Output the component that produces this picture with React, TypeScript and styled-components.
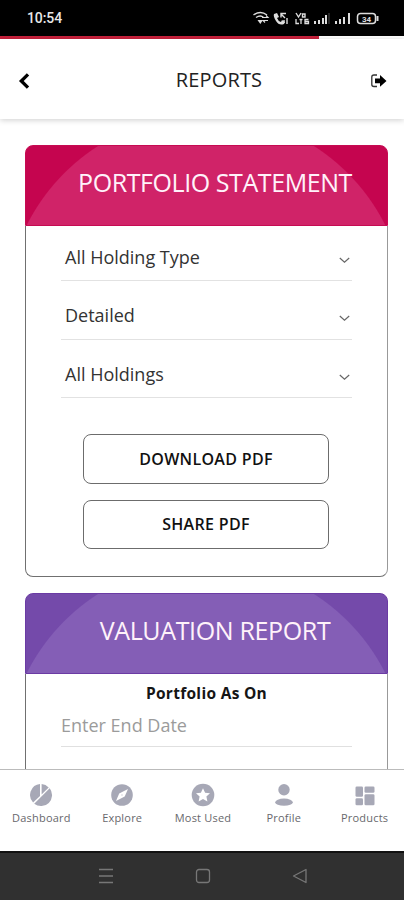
import React from "react";
import styled, { createGlobalStyle } from "styled-components";

const GlobalStyle = createGlobalStyle`
  * { box-sizing: border-box; }
  body { margin: 0; background: #fff; font-family: "Open Sans", "Noto Sans", sans-serif; }
  button { font: inherit; }
`;

const Screen = styled.div`
  width: 404px;
  height: 900px;
  display: flex;
  flex-direction: column;
  overflow: hidden;
  background: #fff;
`;

const StatusBar = styled.div`
  height: 36px;
  flex: none;
  display: flex;
  align-items: center;
  justify-content: space-between;
  padding: 0 24px 0 27px;
  background: #000;
`;

const Clock = styled.span`
  color: #e8e8e8;
  font-family: Roboto, sans-serif;
  font-size: 14px;
  font-weight: 500;
  letter-spacing: -0.1px;
`;

const Progress = styled.div`
  height: 3px;
  flex: none;
  background: #fff;
`;

const ProgressFill = styled.div`
  width: 319px;
  height: 3px;
  background: #c8213c;
`;

const Header = styled.header`
  height: 80px;
  flex: none;
  display: grid;
  grid-template-columns: 40px 1fr 40px;
  align-items: center;
  padding: 4px 12px 0;
  box-shadow: 0 1px 6px rgba(0, 0, 0, 0.2);
  z-index: 1;
  background: #fff;
`;

const IconButton = styled.button<{ $end?: boolean }>`
  display: flex;
  justify-content: ${(p) => (p.$end ? "flex-end" : "flex-start")};
  padding: 0 5px;
  border: 0;
  background: none;
`;

const PageTitle = styled.h1`
  margin: 0;
  padding: 0 0 2px 34px;
  text-align: center;
  font-size: 20px;
  font-weight: 400;
  line-height: 26px;
  letter-spacing: 0.15px;
  color: #222;
`;

const Content = styled.main`
  flex: 1;
  min-height: 0;
  overflow: hidden;
  display: flex;
  flex-direction: column;
  gap: 16px;
  padding: 26px 16px 0 25px;
`;

const Card = styled.section<{ $height: number }>`
  height: ${(p) => p.$height}px;
  flex: none;
  display: flex;
  flex-direction: column;
`;

const CardHeader = styled.div<{ $base: string; $arc: string; $edge: string }>`
  height: 81px;
  flex: none;
  padding: 21px 0 0 17px;
  display: flex;
  justify-content: center;
  border: 1px solid ${(p) => p.$edge};
  border-radius: 8px 8px 0 0;
  background: radial-gradient(circle at 180px 169px, ${(p) => p.$arc} 200px, ${(p) => p.$base} 201px);
`;

const CardBody = styled.div`
  flex: 1;
  border: 1px solid #707070;
  border-top: 0;
  border-right-color: #999;
  border-radius: 0 0 8px 8px;
`;

const CardTitle = styled.h2<{ $spacing: number }>`
  margin: 0;
  color: #fff2fa;
  font-size: 25px;
  font-weight: 400;
  line-height: 30px;
  white-space: nowrap;
  letter-spacing: ${(p) => p.$spacing}px;
`;

const Fields = styled.div`
  display: flex;
  flex-direction: column;
  margin: 0 35px;
  padding-top: 5px;
`;

const Select = styled.div`
  height: 58.5px;
  display: flex;
  align-items: center;
  justify-content: space-between;
  padding: 11px 2px 0 4px;
  border-bottom: 1px solid #e2e2e2;
  color: #333;
  font-size: 18px;
  &:first-child { height: 50px; padding-top: 3px; }
  svg { margin-top: 7px; }
`;

const Actions = styled.div`
  display: flex;
  flex-direction: column;
  gap: 16px;
  margin: 36px 58px 0 57px;
`;

const ActionButton = styled.button`
  height: 49.5px;
  border: 1px solid #6c6c6c;
  border-radius: 8px;
  background: #fff;
  color: #111;
  font-size: 16px;
  font-weight: 600;
  letter-spacing: 0.32px;
`;

const FieldCaption = styled.div`
  padding-top: 8px;
  text-align: center;
  font-size: 15.5px;
  font-weight: 700;
  line-height: 22px;
  letter-spacing: 0.3px;
  color: #151515;
`;

const DateField = styled.div`
  height: 43px;
  margin: 0 35px;
  padding-top: 8px;
  border-bottom: 1px solid #e0e0e0;
  color: #9b9b9b;
  font-size: 18px;
  line-height: 26px;
`;

const TabBar = styled.nav`
  height: 82px;
  flex: none;
  display: grid;
  grid-template-columns: repeat(5, 80.8px);
  border-top: 1px solid #bbb;
  background: #fff;
`;

const Tab = styled.div`
  display: flex;
  flex-direction: column;
  align-items: center;
  padding: 13px 0 0 2px;
  gap: 4px;
  color: #68686c;
  font-size: 11px;
  line-height: 14px;
  white-space: nowrap;
  letter-spacing: 0.2px;
`;

const SystemNav = styled.div`
  height: 49px;
  flex: none;
  display: flex;
  align-items: center;
  justify-content: center;
  gap: 81px;
  padding: 0 0 2px 1px;
  border-top: 2px solid #111;
  background: #303030;
`;

const StatusIcons = () => (
  <svg width="128" height="18" viewBox="0 0 128 18" fill="none" stroke="#ddd" strokeWidth="1.5">
    <path d="M1.5 6 Q8.5 1 15 6M4 8.5Q8.5 5.5 11.5 8.5" />
    <path d="M5.5 11h5.5l-2.7 4z" fill="#ddd" stroke="none" />
    <path d="M10 8.5h6l-2-2M16 11.5h-5l2 2" strokeWidth="1.1" />
    <path d="M22 5l3-1 2 4-2 1q1 3 4 4l1-2 3 2-1 2q-5 2-8-3t-2-7z" fill="#ddd" stroke="none" />
    <path d="M29 5l4 4M34 4.5h-5v4M35 9v6M32 11v3" strokeWidth="1.4" />
    <path d="M44 4l2.5 4L49 4M50.5 5h2.5v3h-2.5z" strokeWidth="1.4" />
    <path d="M44 10v4.5h3M47.5 10.5h3M49 10.5v4.5M56.500 10.500h-3.500v4h3.500v-2h-3" strokeWidth="1.3" />
    <path d="M63 12v3M67 11v4M71 9v6M74 6v9" strokeWidth="2" />
    <path d="M77 4v11" strokeWidth="1.500" stroke="#333" />
    <path d="M84 12v3M88 10v5M92 8v7M97 4v11" strokeWidth="2" />
    <rect x="105.500" y="4.500" width="18" height="10" rx="3" />
    <path d="M125.500 7v5" strokeWidth="2" />
    <text x="110" y="12.500" fill="#ddd" stroke="none" fontFamily="Roboto, sans-serif" fontSize="8" fontWeight="700">34</text>
  </svg>
);

const BackIcon = () => (
  <svg width="15" height="18" viewBox="0 0 15 18" fill="none" stroke="#000" strokeWidth="3.3">
    <path d="M11 2.3L4.3 9l6.700 6.700" />
  </svg>
);

const ExitIcon = () => (
  <svg width="17" height="16" viewBox="0 0 17 16">
    <path d="M7 2H4Q1.800 2 1.800 4v7.500q0 2 2.200 2h3" fill="none" stroke="#333" strokeWidth="1.3" />
    <path d="M5 5.500h5V2l6.500 5.900-6.500 5.900v-3.500H5z" fill="#000" />
  </svg>
);

const Chevron = () => (
  <svg width="11" height="7" viewBox="0 0 11 7" fill="none" stroke="#666" strokeWidth="1.2">
    <path d="M.8 1l4.700 4.300L10.200 1" />
  </svg>
);

const DashboardIcon = () => (
  <>
    <path d="M10 .1A11 11 0 0 0 3.100 18.600L10 12z" />
    <path d="M11.600 0v10.400l7.100-7A11 11 0 0 0 11.600 0z" />
    <path d="M19.700 4.300L4.200 19.700A11 11 0 0 0 19.700 4.300z" />
  </>
);

const ExploreIcon = () => (
  <>
    <circle cx="11" cy="11" r="10.800" />
    <path fill="#fff" d="M17 5l-3.300 7.500L5 17l3.200-7.600z" />
    <circle cx="11" cy="11" r="1" fill="#e5e5ea" />
  </>
);

const StarIcon = () => (
  <>
    <circle cx="11" cy="11" r="11.300" />
    <path fill="#fff" d="M11 4.200l2.100 4.500 4.900.6-3.600 3.300 1 4.900-4.400-2.500-4.400 2.500 1-4.900L4 9.300l4.900-.6z" />
  </>
);

const ProfileIcon = () => (
  <>
    <circle cx="11" cy="5.800" r="5.700" />
    <ellipse cx="11" cy="18.200" rx="8.800" ry="3.600" />
  </>
);

const ProductsIcon = () => (
  <>
    <rect x="1.500" y="2.500" width="7.500" height="10.300" rx="1.300" />
    <rect x="10.500" y="2.500" width="10" height="6.300" rx="1.300" />
    <rect x="1.500" y="14.200" width="7.500" height="7" rx="1.300" />
    <rect x="10.500" y="10.200" width="10" height="11" rx="1.300" />
  </>
);

const tabs = [
  { label: "Dashboard", icon: <DashboardIcon /> },
  { label: "Explore", icon: <ExploreIcon /> },
  { label: "Most Used", icon: <StarIcon /> },
  { label: "Profile", icon: <ProfileIcon /> },
  { label: "Products", icon: <ProductsIcon /> },
];

export default function App() {
  return (
    <>
      <GlobalStyle />
      <Screen>
        <StatusBar>
          <Clock>10:54</Clock>
          <StatusIcons />
        </StatusBar>
        <Progress>
          <ProgressFill />
        </Progress>
        <Header>
          <IconButton aria-label="Back"><BackIcon /></IconButton>
          <PageTitle>REPORTS</PageTitle>
          <IconButton $end aria-label="Log out"><ExitIcon /></IconButton>
        </Header>
        <Content>
          <Card $height={432}>
            <CardHeader $base="#c5054f" $arc="#d02368" $edge="#c60b52">
              <CardTitle $spacing={-0.42}>PORTFOLIO STATEMENT</CardTitle>
            </CardHeader>
            <CardBody>
              <Fields>
                {["All Holding Type", "Detailed", "All Holdings"].map((label) => (
                  <Select key={label}>
                    {label}
                    <Chevron />
                  </Select>
                ))}
              </Fields>
              <Actions>
                <ActionButton>DOWNLOAD PDF</ActionButton>
                <ActionButton>SHARE PDF</ActionButton>
              </Actions>
            </CardBody>
          </Card>
          <Card $height={330}>
            <CardHeader $base="#744aaa" $arc="#845eb6" $edge="#6b3ba4">
              <CardTitle $spacing={-0.35}>VALUATION REPORT</CardTitle>
            </CardHeader>
            <CardBody>
              <FieldCaption>Portfolio As On</FieldCaption>
              <DateField>Enter End Date</DateField>
            </CardBody>
          </Card>
        </Content>
        <TabBar>
          {tabs.map(({ label, icon }) => (
            <Tab key={label}>
              <svg width="24" height="24" viewBox="-1 -1 24 24" fill="#a7a8b6">{icon}</svg>
              {label}
            </Tab>
          ))}
        </TabBar>
        <SystemNav>
          <svg width="16" height="16" viewBox="0 0 16 16" stroke="#777" strokeWidth="1.3">
            <path d="M1 1.500h14M1 8h14M1 14.500h14" />
          </svg>
          <svg width="16" height="16" viewBox="0 0 16 16" fill="none" stroke="#777" strokeWidth="1.3">
            <rect x="1.500" y="1.500" width="13" height="13" rx="2.500" />
          </svg>
          <svg width="16" height="16" viewBox="0 0 16 16" fill="none" stroke="#777" strokeWidth="1.3">
            <path d="M14 1.500v13L1.500 8z" strokeLinejoin="round" />
          </svg>
        </SystemNav>
      </Screen>
    </>
  );
}
